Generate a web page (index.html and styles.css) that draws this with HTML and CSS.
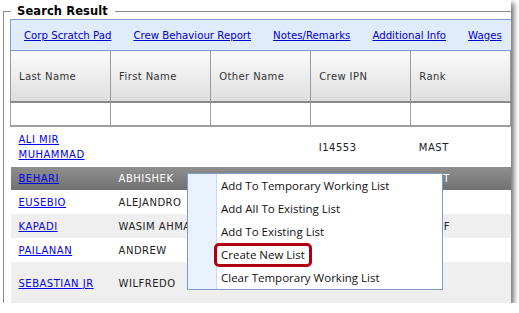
FILE: index.html
```html
<!DOCTYPE html>
<html lang="en">
<head>
  <meta charset="UTF-8">
  <title>Search Result</title>
  <link rel="stylesheet" href="styles.css">
</head>
<body>

  <div class="frame">
    <fieldset class="result">
      <legend>Search Result</legend>

      <div class="tabs">
        <a href="#">Corp Scratch Pad</a>
        <a href="#">Crew Behaviour Report</a>
        <a href="#">Notes/Remarks</a>
        <a href="#">Additional Info</a>
        <a href="#">Wages</a>
      </div>

      <table class="grid">
        <colgroup>
          <col><col><col><col><col><col>
        </colgroup>
        <thead>
          <tr class="head">
            <th>Last Name</th>
            <th>First Name</th>
            <th>Other Name</th>
            <th>Crew IPN</th>
            <th>Rank</th>
            <th></th>
          </tr>
          <tr class="filter">
            <td></td><td></td><td></td><td></td><td></td><td></td>
          </tr>
        </thead>
        <tbody>
          <tr class="tall">
            <td><a href="#">ALI MIR<br>MUHAMMAD</a></td>
            <td></td>
            <td></td>
            <td>I14553</td>
            <td>MAST</td>
            <td></td>
          </tr>
          <tr class="selected">
            <td><a href="#">BEHARI</a></td>
            <td>ABHISHEK</td>
            <td></td>
            <td></td>
            <td class="peek">MAST</td>
            <td></td>
          </tr>
          <tr>
            <td><a href="#">EUSEBIO</a></td>
            <td>ALEJANDRO</td>
            <td></td>
            <td></td>
            <td></td>
            <td></td>
          </tr>
          <tr class="alt">
            <td><a href="#">KAPADI</a></td>
            <td>WASIM AHMAD</td>
            <td></td>
            <td></td>
            <td class="peek">CHOF</td>
            <td></td>
          </tr>
          <tr>
            <td><a href="#">PAILANAN</a></td>
            <td>ANDREW</td>
            <td></td>
            <td></td>
            <td></td>
            <td></td>
          </tr>
          <tr class="alt last">
            <td><a href="#">SEBASTIAN JR</a></td>
            <td>WILFREDO</td>
            <td></td>
            <td></td>
            <td></td>
            <td></td>
          </tr>
        </tbody>
      </table>
    </fieldset>

    <!-- right click menu on the selected row -->
    <ul class="context-menu">
      <li>Add To Temporary Working List</li>
      <li>Add All To Existing List</li>
      <li>Add To Existing List</li>
      <li class="hot"><span>Create New List</span></li>
      <li>Clear Temporary Working List</li>
    </ul>
  </div>

</body>
</html>
```

FILE: styles.css
```css
body {
  margin: 0;
  background-color: #ffffff;
  font-family: "DejaVu Sans", Verdana, sans-serif;
}

.frame {
  position: relative;
  width: 511px;
  height: 303px;
  overflow: hidden;
  background-color: #ffffff;
  box-shadow: 3px 3px 5px rgba(0, 0, 0, 0.55);
}

.result {
  margin: 4px 0 0 3px;
  padding: 0 0 0 6px;
  width: 640px;
  border: 1px solid #8c8c8c;
  border-right: none;
  border-bottom: none;
}

.result legend {
  margin-left: 1px;
  padding: 0 7px 0 6px;
  font-size: 11.5px;
  font-weight: bold;
  line-height: 15px;
  letter-spacing: 0.1px;
  color: #000000;
}

.tabs {
  display: flex;
  gap: 22px;
  height: 30px;
  align-items: center;
  padding-left: 13px;
  border: 1px solid #7c9bd0;
  background-color: #e0ebfb;
}

.tabs a {
  font-size: 10.2px;
  color: #0000cc;
  white-space: nowrap;
}

.grid {
  border-collapse: collapse;
  table-layout: fixed;
  width: 601px;
  font-size: 10px;
  color: #222222;
}

.grid col {
  width: 100px;
}

.grid th,
.grid td {
  padding: 0 8px;
  text-align: left;
  vertical-align: middle;
  white-space: nowrap;
  overflow: hidden;
}

.head th {
  height: 50px;
  font-weight: normal;
  color: #333333;
  letter-spacing: 0.4px;
  background: linear-gradient(#fbfbfb, #dedede);
  border-left: 1px solid #9a9a9a;
  border-bottom: 2px solid #8a8a8a;
}

.filter td {
  height: 22px;
  border-left: 1px solid #a0a0a0;
  border-bottom: 2px solid #a0a0a0;
}

tbody td {
  height: 24px;
  letter-spacing: 0.5px;
}

tbody tr.tall td {
  height: 40px;
  line-height: 15px;
}

tbody tr.last td {
  height: 42px;
}

tbody a {
  color: #0000ee;
}

tbody tr.alt {
  background-color: #efefef;
}

tbody tr.selected {
  background: linear-gradient(#8e8e8e, #727272);
}

tbody tr.selected td {
  height: 23px;
  color: #ffffff;
}

.grid td.peek {
  padding-left: 9px;
}

.context-menu {
  position: absolute;
  left: 187px;
  top: 173px;
  width: 254px;
  margin: 0;
  padding: 0;
  list-style: none;
  border: 1px solid #7f9cc4;
  background: linear-gradient(to right, #e9f1fd 28px, #cbdaf0 28px, #cbdaf0 29px, #ffffff 29px);
  font-family: "Open Sans", "Noto Sans", sans-serif;
  font-size: 11.5px;
  color: #111111;
}

.context-menu li {
  height: 23px;
  line-height: 23px;
  padding-left: 33px;
  white-space: nowrap;
}

.context-menu li.hot span {
  display: inline-block;
  line-height: 18px;
  margin-left: -7px;
  padding: 0 4px;
  border: 3px solid #b0000c;
  border-radius: 5px;
}
```
